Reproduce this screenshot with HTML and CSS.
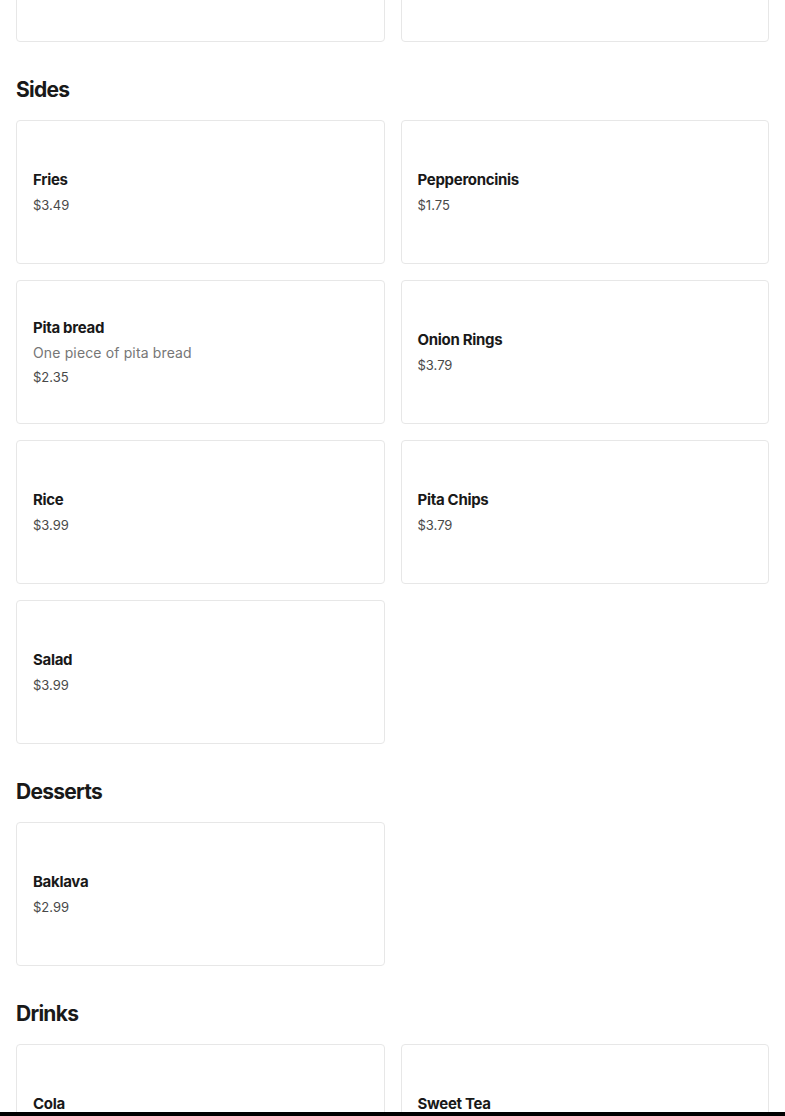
FILE: index.html
```html
<!DOCTYPE html>
<html>
<head>
<meta charset="utf-8">
<link rel="stylesheet" href="styles.css">
</head>
<body>
<main class="menu">
  <div class="grid">
    <div class="card"></div>
    <div class="card"></div>
  </div>

  <h2 class="section-title">Sides</h2>
  <div class="grid">
    <div class="card"><div class="name">Fries</div><div class="price">$3.49</div></div>
    <div class="card"><div class="name">Pepperoncinis</div><div class="price">$1.75</div></div>
    <div class="card"><div class="name">Pita bread</div><div class="desc">One piece of pita bread</div><div class="price">$2.35</div></div>
    <div class="card"><div class="name">Onion Rings</div><div class="price">$3.79</div></div>
    <div class="card"><div class="name">Rice</div><div class="price">$3.99</div></div>
    <div class="card"><div class="name">Pita Chips</div><div class="price">$3.79</div></div>
    <div class="card"><div class="name">Salad</div><div class="price">$3.99</div></div>
  </div>

  <h2 class="section-title">Desserts</h2>
  <div class="grid">
    <div class="card"><div class="name">Baklava</div><div class="price">$2.99</div></div>
  </div>

  <h2 class="section-title">Drinks</h2>
  <div class="grid">
    <div class="card"><div class="name">Cola</div><div class="price">$1.99</div></div>
    <div class="card"><div class="name">Sweet Tea</div><div class="price">$1.99</div></div>
  </div>
</main>
<div class="bottom-bar"></div>
</body>
</html>
```
FILE: styles.css
```css
html, body {
  margin: 0;
  padding: 0;
  background: #ffffff;
}
body {
  font-family: Inter, "Liberation Sans", sans-serif;
  color: #191919;
  overflow: hidden;
  height: 1116px;
}
.menu {
  padding: 0 16px;
  margin-top: -102px;
}
.grid {
  display: grid;
  grid-template-columns: 1fr 1fr;
  gap: 16px;
  margin-bottom: 32px;
}
.card {
  height: 144px;
  box-sizing: border-box;
  border: 1px solid #e7e7e7;
  border-radius: 4px;
  padding: 16px;
  display: flex;
  flex-direction: column;
  justify-content: center;
}
.section-title {
  margin: 0 0 15px;
  padding-top: 1px;
  font-size: 21px;
  line-height: 30px;
  font-weight: 700;
  letter-spacing: -0.035em;
  color: #191919;
}
.name {
  font-size: 15px;
  line-height: 24px;
  font-weight: 700;
  letter-spacing: -0.02em;
  margin-bottom: 1px;
  color: #191919;
}
.desc {
  font-size: 14px;
  line-height: 24px;
  letter-spacing: 0.01em;
  color: #767676;
}
.price {
  font-size: 13px;
  line-height: 24px;
  color: #494949;
}
.bottom-bar {
  position: fixed;
  left: 0;
  right: 0;
  bottom: 0;
  height: 4px;
  background: #000;
}
```
